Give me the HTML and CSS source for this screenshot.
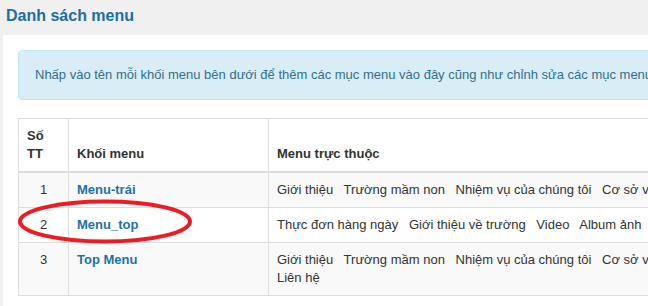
FILE: index.html
```html
<!DOCTYPE html>
<html lang="vi">
<head>
  <meta charset="UTF-8" />
  <title>Danh sách menu</title>
  <link rel="stylesheet" href="styles.css">
</head>
<body>

  <h1 class="page-title">Danh sách menu</h1>

  <div class="panel">
    <div class="alert">
      Nhấp vào tên mỗi khối menu bên dưới để thêm các mục menu vào đây cũng như chỉnh sửa các mục menu đã có
    </div>

    <div class="table-wrap">
      <table class="menu-table">
        <thead>
          <tr>
            <th class="col-num">Số TT</th>
            <th class="col-name">Khối menu</th>
            <th>Menu trực thuộc</th>
          </tr>
        </thead>
        <tbody>
          <tr>
            <td class="num">1</td>
            <td><a href="#">Menu-trái</a></td>
            <td>
              <span class="item">Giới thiệu</span>
              <span class="item">Trường mầm non</span>
              <span class="item">Nhiệm vụ của chúng tôi</span>
              <span class="item">Cơ sở vật chất</span>
            </td>
          </tr>
          <tr>
            <td class="num">2</td>
            <td><a href="#">Menu_top</a></td>
            <td>
              <span class="item">Thực đơn hàng ngày</span>
              <span class="item">Giới thiệu về trường</span>
              <span class="item">Video</span>
              <span class="item">Album ảnh</span>
            </td>
          </tr>
          <tr>
            <td class="num">3</td>
            <td><a href="#">Top Menu</a></td>
            <td>
              <span class="item">Giới thiệu</span>
              <span class="item">Trường mầm non</span>
              <span class="item">Nhiệm vụ của chúng tôi</span>
              <span class="item">Cơ sở vật chất</span>
              <span class="item">Tin tức</span>
              <span class="item">Liên hệ</span>
            </td>
          </tr>
        </tbody>
      </table>

      <!-- vòng khoanh đỏ -->
      <svg class="mark" width="180" height="50" viewBox="0 0 180 50">
        <ellipse cx="87" cy="23.5" rx="85" ry="20" fill="none" stroke="#ed1c24" stroke-width="4" />
      </svg>
    </div>
  </div>

</body>
</html>
```

FILE: styles.css
```css
* {
  box-sizing: border-box;
  margin: 0;
  padding: 0;
}

body {
  font-family: "Liberation Sans", Arial, sans-serif;
  font-size: 13px;
  line-height: 18px;
  color: #333;
  background: #f0f0f0;
  overflow: hidden;
  width: 648px;
  height: 306px;
}

.page-title {
  font-size: 16px;
  font-weight: bold;
  color: #1c6ea4;
  height: 35px;
  line-height: 20px;
  padding: 6px 0 0 6px;
}

.panel {
  background: #fff;
  margin-left: 3px;
  width: 900px;
  height: 271px;
  padding: 15px;
}

.alert {
  background: #d9edf7;
  border: 1px solid #bce8f1;
  border-radius: 4px;
  color: #31708f;
  padding: 15px 16px;
  margin-bottom: 18px;
  white-space: nowrap;
  overflow: hidden;
}

.table-wrap {
  position: relative;
}

.menu-table {
  border-collapse: collapse;
  width: 760px;
  table-layout: fixed;
}

.menu-table th,
.menu-table td {
  border: 1px solid #ddd;
  padding: 8px;
  text-align: left;
  vertical-align: top;
}

.menu-table th {
  font-weight: bold;
  vertical-align: bottom;
  border-bottom-width: 2px;
}

.col-num {
  width: 50px;
}

.col-name {
  width: 200px;
}

.menu-table tbody tr:nth-child(odd) {
  background: #f9f9f9;
}

.menu-table td.num {
  text-align: center;
}

.menu-table a {
  color: #1b72aa;
  font-weight: bold;
  text-decoration: none;
}

.item {
  margin-right: 7px;
}

.mark {
  position: absolute;
  left: 0;
  top: 80px;
  pointer-events: none;
}
```
